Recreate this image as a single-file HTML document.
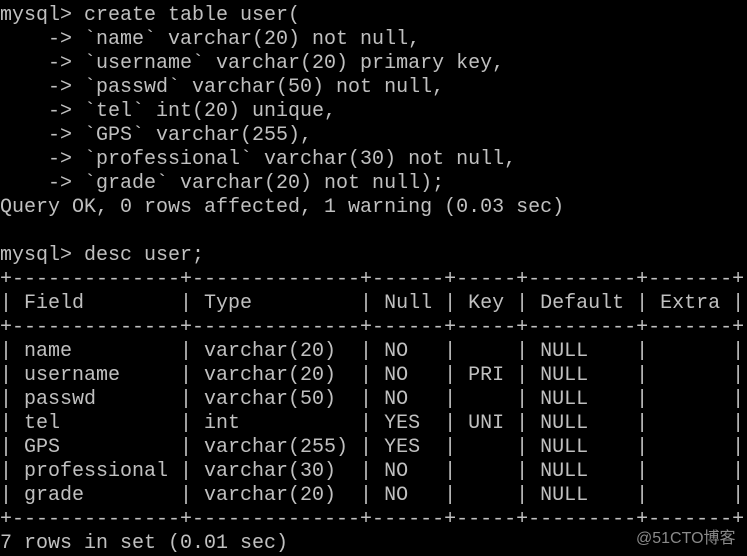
<!DOCTYPE html>
<html><head><meta charset="utf-8"><style>
html,body{margin:0;padding:0;background:#000;width:747px;height:556px;overflow:hidden;}
pre{margin:0;position:absolute;left:0;top:4px;font-family:"Liberation Mono",monospace;font-size:20px;line-height:24px;color:#c0c0c0;white-space:pre;}
.wm{position:absolute;left:636px;top:524px;font-family:"Liberation Sans","Noto Sans CJK SC",sans-serif;font-size:16px;color:#8a8a8a;}
</style></head><body>
<pre>mysql&gt; create table user(
    -&gt; `name` varchar(20) not null,
    -&gt; `username` varchar(20) primary key,
    -&gt; `passwd` varchar(50) not null,
    -&gt; `tel` int(20) unique,
    -&gt; `GPS` varchar(255),
    -&gt; `professional` varchar(30) not null,
    -&gt; `grade` varchar(20) not null);
Query OK, 0 rows affected, 1 warning (0.03 sec)

mysql&gt; desc user;
+--------------+--------------+------+-----+---------+-------+
| Field        | Type         | Null | Key | Default | Extra |
+--------------+--------------+------+-----+---------+-------+
| name         | varchar(20)  | NO   |     | NULL    |       |
| username     | varchar(20)  | NO   | PRI | NULL    |       |
| passwd       | varchar(50)  | NO   |     | NULL    |       |
| tel          | int          | YES  | UNI | NULL    |       |
| GPS          | varchar(255) | YES  |     | NULL    |       |
| professional | varchar(30)  | NO   |     | NULL    |       |
| grade        | varchar(20)  | NO   |     | NULL    |       |
+--------------+--------------+------+-----+---------+-------+
7 rows in set (0.01 sec)</pre>
<div class="wm">@51CTO博客</div>
</body></html>
